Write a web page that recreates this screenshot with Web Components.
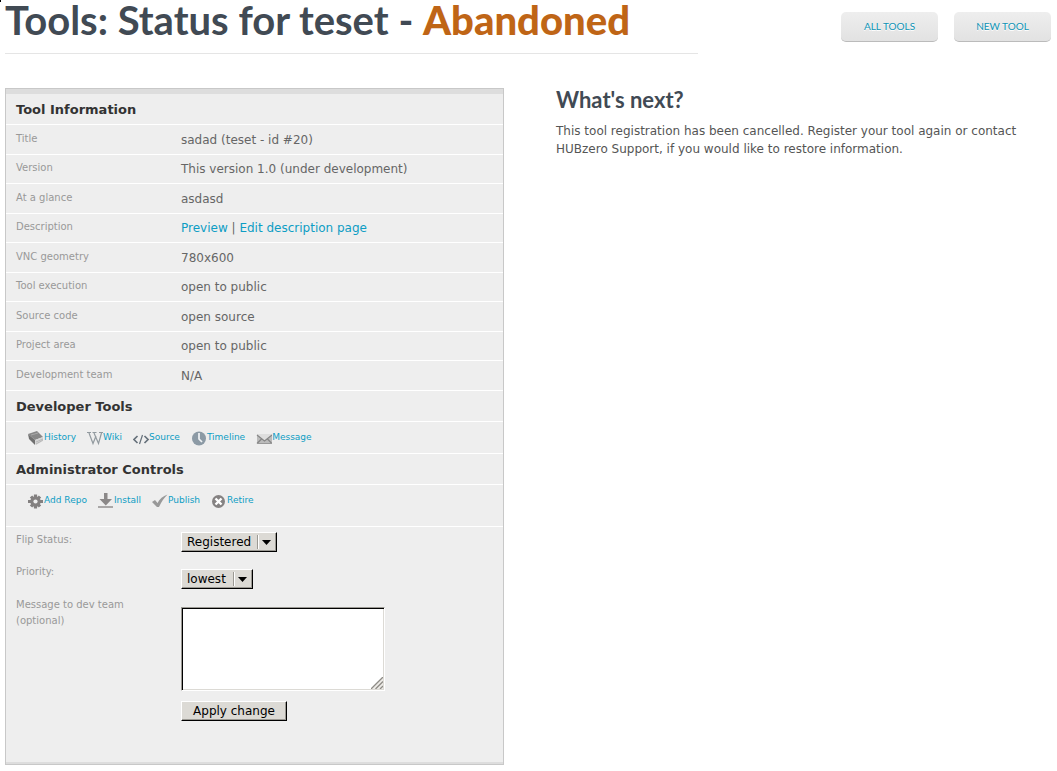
<!DOCTYPE html>
<html lang="en">
<head>
<meta charset="utf-8">
<title>Tools: Status for teset</title>
<style>
body{margin:0;background:#fff;color:#555;font:12px/18px "DejaVu Sans",sans-serif}
</style>
</head>
<body>
<tool-status-page></tool-status-page>
<script>
function define(name, html, setup){
  const template=document.createElement('template');
  template.innerHTML=html;
  customElements.define(name,class extends HTMLElement{
    connectedCallback(){
      if(this.shadowRoot)return;
      this.attachShadow({mode:'open'}).append(template.content.cloneNode(true));
      if(setup)setup(this,this.shadowRoot);
    }
  });
}

const ICONS={
history:'<path d="M0 4l9-3 6 6-8 3z" fill="#888"/><path d="M0 4l7 6v5L1 9z" fill="#707070"/><path d="M7 10l8-3v4l-7 4-1-1z" fill="#d6d6d6"/><path d="M8 12l7-3M8 14l7-4" stroke="#aaa" fill="none" stroke-width=".7"/><path d="M3 5l7-2" stroke="#aaa" fill="none"/>',
wiki:'<path d="M0 2.500h4M5.500 2.500h4M12 2.500h4" stroke="#929a9f"/><path d="M2 3l4 10.500L9 6M7 3l4.500 10.500L14.500 3" fill="none" stroke="#929a9f" stroke-width="1.200"/>',
source:'<path d="M4.500 6L1 9.500 4.500 13M11.500 6L15 9.500 11.500 13" fill="none" stroke="#65707a" stroke-width="1.600"/><path d="M9.500 5l-3 9" stroke="#65707a" stroke-width="1.200"/>',
timeline:'<circle cx="8" cy="8.500" r="7" fill="#8c9aa5"/><path d="M8 3v6l3 3" fill="none" stroke="#f1f4f6" stroke-width="1.700"/>',
message:'<path d="M1 4h15v10H1z" fill="#bbb"/><path d="M1 4h15v1l-7.500 6L1 5z" fill="#dedede"/><path d="M1 5l7.500 6L16 5M1 13.500l5-5M16 13.500l-5-5" stroke="#858585" fill="none" stroke-width="1.200"/><path d="M1 13.500h15" stroke="#999"/>',
gear:'<g stroke="#838080" stroke-width="3.200"><path d="M7.500 1.500v14M0 8.500h15M3 3.500l9 10M12 3.500l-9 10"/></g><circle cx="7.500" cy="8.500" r="5.200" fill="#838080"/><circle cx="7.500" cy="8.500" r="2.100" fill="#eee"/>',
install:'<path d="M6 0h3.500v6H14l-6.200 6.500L1.500 6H6z" fill="#8b8888"/><path d="M0 14h15" stroke="#8b8888" stroke-width="1.400"/>',
publish:'<path d="M0 9l3-2 2.500 3C7.500 6 11 3 15.500 1.500 12 5 9.500 8.500 7 14H5z" fill="#999"/>',
retire:'<circle cx="7.500" cy="8.500" r="6.500" fill="#858282"/><path d="M4.500 5.500l6 6M10.500 5.500l-6 6" stroke="#fff" stroke-width="2.400"/>'
};

define('hub-button',`<style>
:host{display:block}
button{box-sizing:border-box;min-width:97px;height:30px;padding:0 16px 1px;border:0;border-bottom:1px solid #bbb;border-radius:5px;background:linear-gradient(#eee,#e2e2e2);color:#0d93b5;font:10px/16px Lato,sans-serif;text-shadow:0 1px #fff;text-transform:uppercase}
</style><button type="button"><slot></slot></button>`);

define('page-header',`<style>
:host{display:flex;justify-content:space-between;align-items:flex-start}
h1{flex:0 0 auto;width:66.3%;box-sizing:border-box;height:54px;margin:0;border-bottom:1px solid #e5e5e5;color:#414a54;font:bold 40px/40px Lato,sans-serif;white-space:nowrap}
nav{display:flex;gap:16px;padding-top:12px}
::slotted(strong){color:#bf6516}
</style><h1><slot></slot></h1><nav><slot name="actions"></slot></nav>`);

define('section-heading',`<style>
:host{display:block;border-bottom:1px solid #fff}
h2{margin:0;padding:7px 10px 5px;color:#333;font:bold 13px/18px "DejaVu Sans",sans-serif}
</style><h2><slot></slot></h2>`);

define('info-table',`<style>
:host{display:block}
table{width:100%;border-collapse:separate;border-spacing:0;table-layout:fixed}
tr{height:29px}tr:nth-child(odd){height:30px}
th,td{box-sizing:border-box;padding:0;border-bottom:1px solid #fff;text-align:left;vertical-align:middle}
th{width:175px;padding:0 0 2px 10px;color:#999;font:10px/16px "DejaVu Sans",sans-serif}
td{color:#666}
a{color:#0d9dc4;text-decoration:none}
</style><table><tbody>
<tr><th scope="row">Title</th><td>sadad (teset - id #20)</td></tr>
<tr><th scope="row">Version</th><td>This version 1.0 (under development)</td></tr>
<tr><th scope="row">At a glance</th><td>asdasd</td></tr>
<tr><th scope="row">Description</th><td><a href="#preview">Preview</a> | <a href="#edit">Edit description page</a></td></tr>
<tr><th scope="row">VNC geometry</th><td>780x600</td></tr>
<tr><th scope="row">Tool execution</th><td>open to public</td></tr>
<tr><th scope="row">Source code</th><td>open source</td></tr>
<tr><th scope="row">Project area</th><td>open to public</td></tr>
<tr><th scope="row">Development team</th><td>N/A</td></tr>
</tbody></table>`);

define('icon-link',`<style>
:host{display:block}
a{display:flex;align-items:flex-start;color:#0d9dc4;font:9px/14px "DejaVu Sans",sans-serif;text-decoration:none}
svg{width:16px;height:16px;flex:none}
</style><a><svg viewBox="0 0 16 16" aria-hidden="true"></svg><slot></slot></a>`,(el,root)=>{
  root.querySelector('svg').innerHTML=ICONS[el.getAttribute('icon')];
  root.querySelector('a').href='#'+el.getAttribute('icon');
});

define('link-bar',`<style>
:host{display:flex;flex-wrap:wrap;gap:11px;padding:8px 10px 7px 22px;border-bottom:1px solid #fff}
:host([roomy]){padding-bottom:17px}
</style><slot></slot>`);

define('admin-form',`<style>
:host{display:block}
form{display:grid;grid-template-columns:165px minmax(0,1fr);grid-template-rows:32px 33px auto auto;padding:5px 10px 41px}
label{width:120px;color:#999;font:10px/16px "DejaVu Sans",sans-serif}
.field{position:relative;justify-self:start;align-self:start;display:flex}
.low{margin-top:5px}
.area{margin-top:10px}
select,button{box-sizing:border-box;height:20px;margin:0;appearance:none;border:1px solid;border-color:#fff #000 #000 #fff;border-radius:0;background:#dcdad5;box-shadow:inset -1px -1px #9b9993;color:#000;font:12px/16px "DejaVu Sans",sans-serif}
select{width:96px;padding:0 20px 0 5px}
#priority{width:72px}
.arrow{position:absolute;right:4px;top:3px;width:16px;height:14px;pointer-events:none}
textarea{box-sizing:border-box;width:204px;height:84px;margin:0;border:1px solid;border-color:#9b9993 #fff #fff #9b9993;border-radius:0;box-shadow:inset 1px 1px #000,inset -1px -1px #dcdad5;background:#fff;resize:none;font:12px/18px "DejaVu Sans",sans-serif}
.grip{position:absolute;right:2px;bottom:2px;width:12px;height:12px;pointer-events:none}
button{grid-column:2;justify-self:start;min-width:106px;margin-top:10px;padding:0 10px}
</style><form>
<label for="status">Flip Status:</label>
<div class="field"><select id="status"><option>Registered</option><option>Abandoned</option></select><svg class="arrow" viewBox="0 0 16 14"><path d="M.5 0v14" stroke="#9b9993"/><path d="M1.500 0v14" stroke="#fff"/><path d="M5 5h9L9.500 10z"/></svg></div>
<label for="priority">Priority:</label>
<div class="field low"><select id="priority"><option>lowest</option><option>normal</option></select><svg class="arrow" viewBox="0 0 16 14"><path d="M.5 0v14" stroke="#9b9993"/><path d="M1.500 0v14" stroke="#fff"/><path d="M5 5h9L9.500 10z"/></svg></div>
<label for="message">Message to dev team (optional)</label>
<div class="field area"><textarea id="message"></textarea><svg class="grip" viewBox="0 0 12 12"><path d="M0 12L12 0v12z" fill="#eceae6"/><path d="M0 12L12 0M4.500 12L12 4.500M9 12l3-3" stroke="#8e8c86" stroke-width="1.300"/></svg></div>
<button type="button">Apply change</button>
</form>`);

define('tool-panel',`<style>
:host{display:block;box-sizing:border-box;border:1px solid #c8c8c8;background:#eee}
div{border-top:5px solid #ddd;border-bottom:2px solid #ddd}
</style><div><slot></slot></div>`);

define('next-steps',`<style>
:host{display:block;color:#555}
h2{margin:0;color:#414a54;font:bold 22px/24px Lato,sans-serif}
p{margin:10px 0 0}
</style><h2><slot name="title"></slot></h2><p><slot></slot></p>`);

define('tool-status-page',`<style>
:host{display:block;padding:0 6px 6px 5px}
:host::before{content:"";position:absolute;left:0;top:0;width:1px;height:2px;background:#000}
main{display:grid;grid-template-columns:499fr 495fr;gap:52px;align-items:start;margin-top:34px}
</style>
<page-header>Tools: Status for teset - <strong>Abandoned</strong><hub-button slot="actions">All Tools</hub-button><hub-button slot="actions">New Tool</hub-button></page-header>
<main>
<tool-panel>
<section-heading>Tool Information</section-heading>
<info-table></info-table>
<section-heading>Developer Tools</section-heading>
<link-bar><icon-link icon="history">History</icon-link><icon-link icon="wiki">Wiki</icon-link><icon-link icon="source">Source</icon-link><icon-link icon="timeline">Timeline</icon-link><icon-link icon="message">Message</icon-link></link-bar>
<section-heading>Administrator Controls</section-heading>
<link-bar roomy><icon-link icon="gear">Add Repo</icon-link><icon-link icon="install">Install</icon-link><icon-link icon="publish">Publish</icon-link><icon-link icon="retire">Retire</icon-link></link-bar>
<admin-form></admin-form>
</tool-panel>
<next-steps><span slot="title">What's next?</span>This tool registration has been cancelled. Register your tool again or contact HUBzero Support, if you would like to restore information.</next-steps>
</main>`);
</script>
</body>
</html>
